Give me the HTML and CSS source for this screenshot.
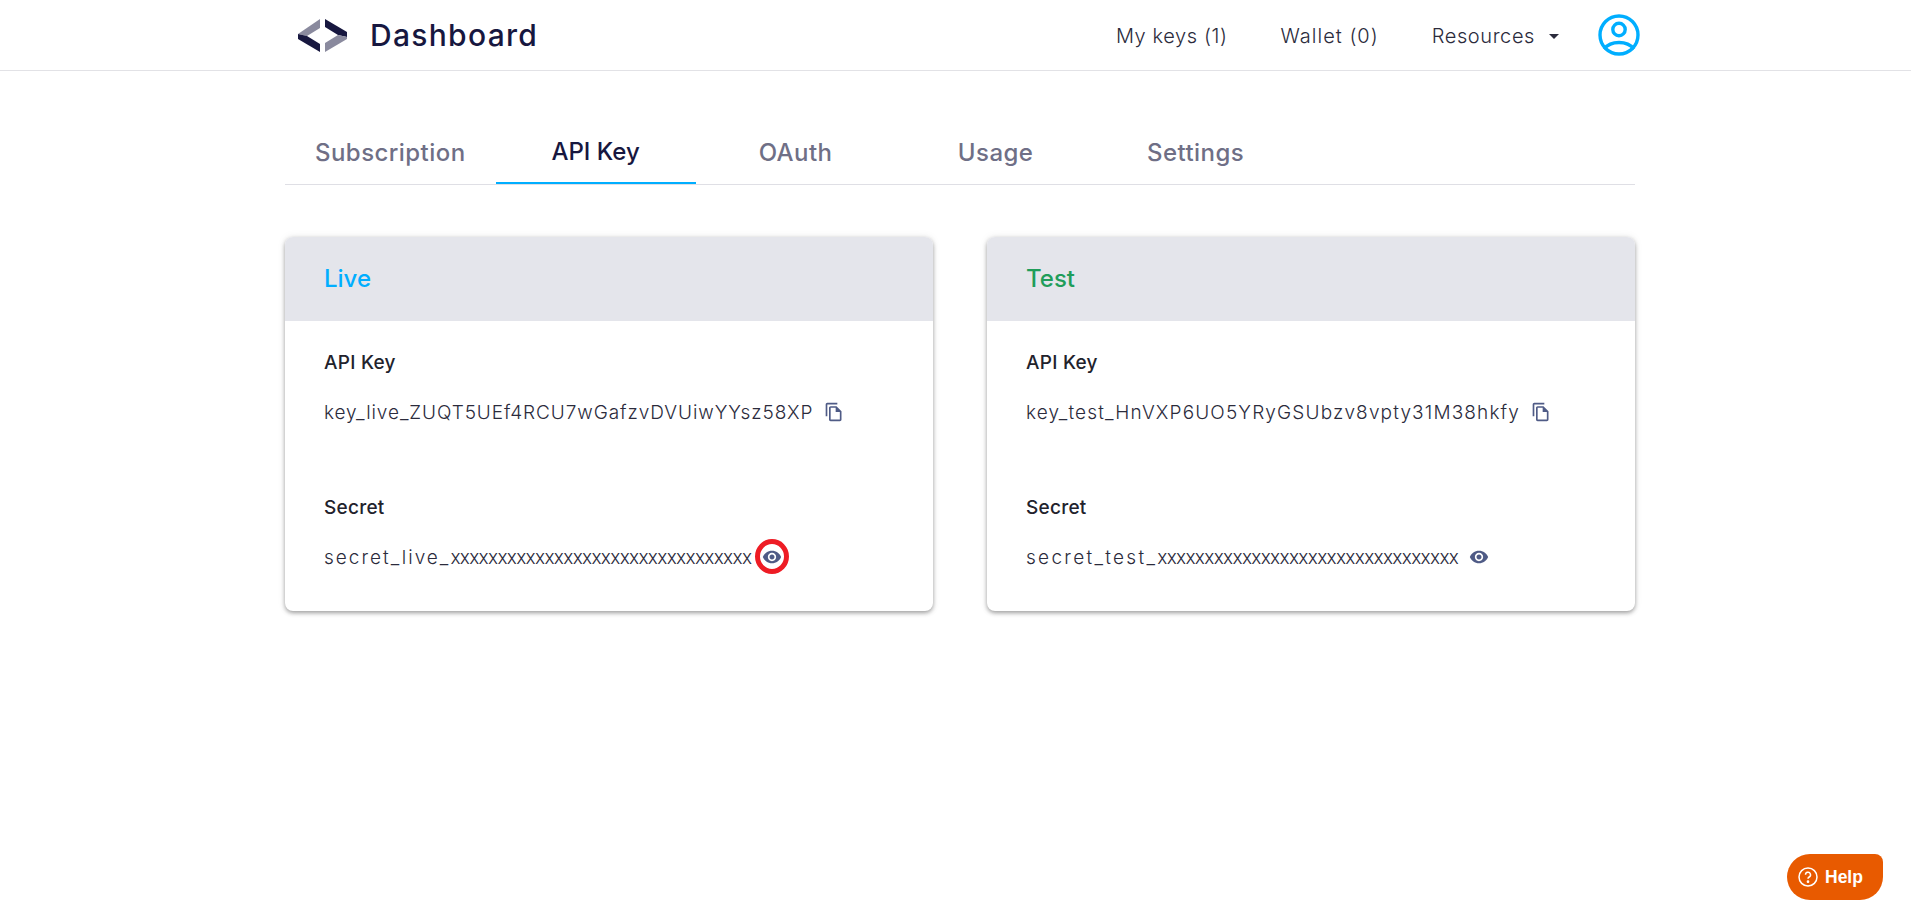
FILE: index.html
```html
<!DOCTYPE html>
<html lang="en">
<head>
<meta charset="utf-8">
<title>Dashboard</title>
<link rel="stylesheet" href="styles.css">
</head>
<body>
<header class="topbar">
  <div class="topbar-inner">
    <a class="brand">
      <svg class="brand-logo" viewBox="0 0 49 33" width="49" height="33"><path fill="#8a8a9e" d="M22 0v9L9 17 0 15z"/><path fill="#17173f" d="M0 15l9 2 13 8v8L0 20z"/><path fill="#17173f" d="M27 0l22 13v5l-9-2-13-8z"/><path fill="#8a8a9e" d="M49 18v2L27 33v-9l13-8z"/></svg>
      <span class="brand-name">Dashboard</span>
    </a>
    <nav class="topnav">
      <a class="topnav-link">My keys (1)</a>
      <a class="topnav-link wide">Wallet (0)</a>
      <a class="topnav-link">Resources<span class="caret"></span></a>
      <svg class="avatar" viewBox="0 0 42 42" width="42" height="42" fill="none" stroke="#00aeff" stroke-width="3.4"><circle cx="21" cy="21" r="19"/><circle cx="21" cy="15.500" r="6.200"/><path d="M6 35c4-5 9-6.500 15-6.500s11 1.500 15 6.500"/></svg>
    </nav>
  </div>
</header>
<main class="content">
  <div class="tabs">
    <a class="tab">Subscription</a>
    <a class="tab tab-active">API Key</a>
    <a class="tab">OAuth</a>
    <a class="tab">Usage</a>
    <a class="tab">Settings</a>
  </div>
  <div class="cards">
    <section class="card">
      <h2 class="card-head live">Live</h2>
      <div class="card-body">
        <div class="label">API Key</div>
        <div class="value key-live"><span>key_live_ZUQT5UEf4RCU7wGafzvDVUiwYYsz58XP</span>
          <svg class="ico copy" viewBox="0 0 24 24" width="20" height="20"><path fill="#4f5b86" fill-rule="evenodd" d="M16 1H4c-1.100 0-2 .9-2 2v14h2V3h12V1zm-1 4l6 6v10c0 1.100-.9 2-2 2H7.990C6.890 23 6 22.100 6 21l.01-14c0-1.100.89-2 1.990-2h7zM8 7v14h11V12h-5V7z"/></svg>
        </div>
        <div class="label label-secret">Secret</div>
        <div class="value secret"><span>secret_live_<span class="mask">xxxxxxxxxxxxxxxxxxxxxxxxxxxxxxxx</span></span>
          <span class="eye-wrap marked">
            <svg class="ico" viewBox="0 0 24 24" width="20" height="20"><path fill="#4f5b86" d="M12 4.500C7 4.500 2.730 7.610 1 12c1.730 4.390 6 7.500 11 7.500s9.270-3.110 11-7.500c-1.730-4.390-6-7.500-11-7.500zM12 17c-2.760 0-5-2.240-5-5s2.240-5 5-5 5 2.240 5 5-2.240 5-5 5zm0-8c-1.660 0-3 1.340-3 3s1.340 3 3 3 3-1.340 3-3-1.340-3-3-3z"/></svg>
          </span>
        </div>
      </div>
    </section>
    <section class="card">
      <h2 class="card-head test">Test</h2>
      <div class="card-body">
        <div class="label">API Key</div>
        <div class="value key-test"><span>key_test_HnVXP6UO5YRyGSUbzv8vpty31M38hkfy</span>
          <svg class="ico copy" viewBox="0 0 24 24" width="20" height="20"><path fill="#4f5b86" fill-rule="evenodd" d="M16 1H4c-1.100 0-2 .9-2 2v14h2V3h12V1zm-1 4l6 6v10c0 1.100-.9 2-2 2H7.990C6.890 23 6 22.100 6 21l.01-14c0-1.100.89-2 1.990-2h7zM8 7v14h11V12h-5V7z"/></svg>
        </div>
        <div class="label label-secret">Secret</div>
        <div class="value secret secret-test"><span>secret_test_<span class="mask">xxxxxxxxxxxxxxxxxxxxxxxxxxxxxxxx</span></span>
          <span class="eye-wrap">
            <svg class="ico" viewBox="0 0 24 24" width="20" height="20"><path fill="#4f5b86" d="M12 4.500C7 4.500 2.730 7.610 1 12c1.730 4.390 6 7.500 11 7.500s9.270-3.110 11-7.500c-1.730-4.390-6-7.500-11-7.500zM12 17c-2.760 0-5-2.240-5-5s2.240-5 5-5 5 2.240 5 5-2.240 5-5 5zm0-8c-1.660 0-3 1.340-3 3s1.340 3 3 3 3-1.340 3-3-1.340-3-3-3z"/></svg>
          </span>
        </div>
      </div>
    </section>
  </div>
</main>
<button class="help">
  <svg viewBox="0 0 20 20" width="20" height="20" fill="none" stroke="#fff" stroke-width="1.500"><circle cx="10" cy="10" r="9"/><path d="M7.500 7.800a2.500 2.500 0 1 1 3.700 2.200c-.8.500-1.200 1-1.200 1.800"/><circle cx="10" cy="14.700" r=".6" fill="#fff"/></svg>
  <span>Help</span>
</button>
</body>
</html>
```
FILE: styles.css
```css
*, *::before, *::after { box-sizing: border-box; }
html, body { margin: 0; height: 100%; }
body { background: #fff; color: #22223a; font-family: "Inter", "Liberation Sans", sans-serif; overflow: hidden; }
h2 { margin: 0; }

.topbar { height: 71px; border-bottom: 1px solid #e2e2e6; }
.topbar-inner { width: 1350px; margin: 0 0 0 285px; height: 70px; display: flex; align-items: center; justify-content: space-between; padding-left: 13px; }
.brand { display: flex; align-items: center; gap: 23px; }
.brand-logo { display: block; }
.brand-name { font-size: 30px; font-weight: 500; letter-spacing: 1.3px; color: #17173f; }
.topnav { display: flex; align-items: center; gap: 53px; margin-right: -5px; }
.topnav-link { font-size: 20px; font-weight: 300; letter-spacing: .6px; color: #2b2b3c; display: flex; align-items: center; padding-top: 2px; }
.wide { letter-spacing: 1px; }
.caret { width: 0; height: 0; margin-left: 14px; border-left: 5px solid transparent; border-right: 5px solid transparent; border-top: 5px solid #2b2b3c; }
.avatar { display: block; margin-left: -14px; }

.content { width: 1350px; margin-left: 285px; padding-top: 39px; }
.tabs { display: flex; height: 75px; border-bottom: 1px solid #dfdfe5; }
.tab { min-width: 200px; height: 74px; padding: 10px 30px 0; display: flex; align-items: center; justify-content: center; font-size: 24px; font-weight: 500; letter-spacing: .45px; color: #6f6f86; }
.tab-active { color: #17173f; letter-spacing: 0; border-bottom: 2px solid #00aeff; }

.cards { display: grid; grid-template-columns: 648px 648px; gap: 54px; margin-top: 52px; }
.card { border-radius: 8px; background: #fff; box-shadow: 0 2px 4px rgba(0,0,0,.35), 0 0 8px rgba(0,0,0,.08); overflow: hidden; height: 374px; }
.card-head { height: 84px; background: #e4e5eb; padding: 0 0 2px 39px; display: flex; align-items: center; font-size: 24px; font-weight: 500; }
.live { color: #00aeff; }
.test { color: #1f9d5a; }
.card-body { padding: 30px 39px 0; }
.label { height: 24px; line-height: 24px; font-size: 19px; font-weight: 500; letter-spacing: .25px; color: #22222c; }
.label-secret { margin-top: 72px; }
.value { margin-top: 25px; height: 24px; display: flex; align-items: center; gap: 11px; font-size: 19px; font-weight: 300; color: #2b2b3c; }
.key-live { letter-spacing: .92px; }
.key-test { letter-spacing: 1.15px; }
.secret { letter-spacing: 2px; }
.secret-test { letter-spacing: 2.3px; }
.mask { letter-spacing: -.68px; }
.ico { display: block; flex: none; }
.eye-wrap { position: relative; display: block; width: 20px; height: 20px; }
.marked::after { content: ""; position: absolute; left: -7px; top: -8px; width: 34px; height: 35px; border: 5px solid #ee1c25; border-radius: 50%; }

.help { position: fixed; right: 28px; bottom: 9px; width: 96px; height: 46px; border: 0; border-radius: 23px 8px 23px 23px; background: #e85a00; color: #fff; display: flex; align-items: center; gap: 7px; padding: 0 0 0 11px; font: 700 17.500px "Liberation Sans", sans-serif; }
.help svg { display: block; }
```
